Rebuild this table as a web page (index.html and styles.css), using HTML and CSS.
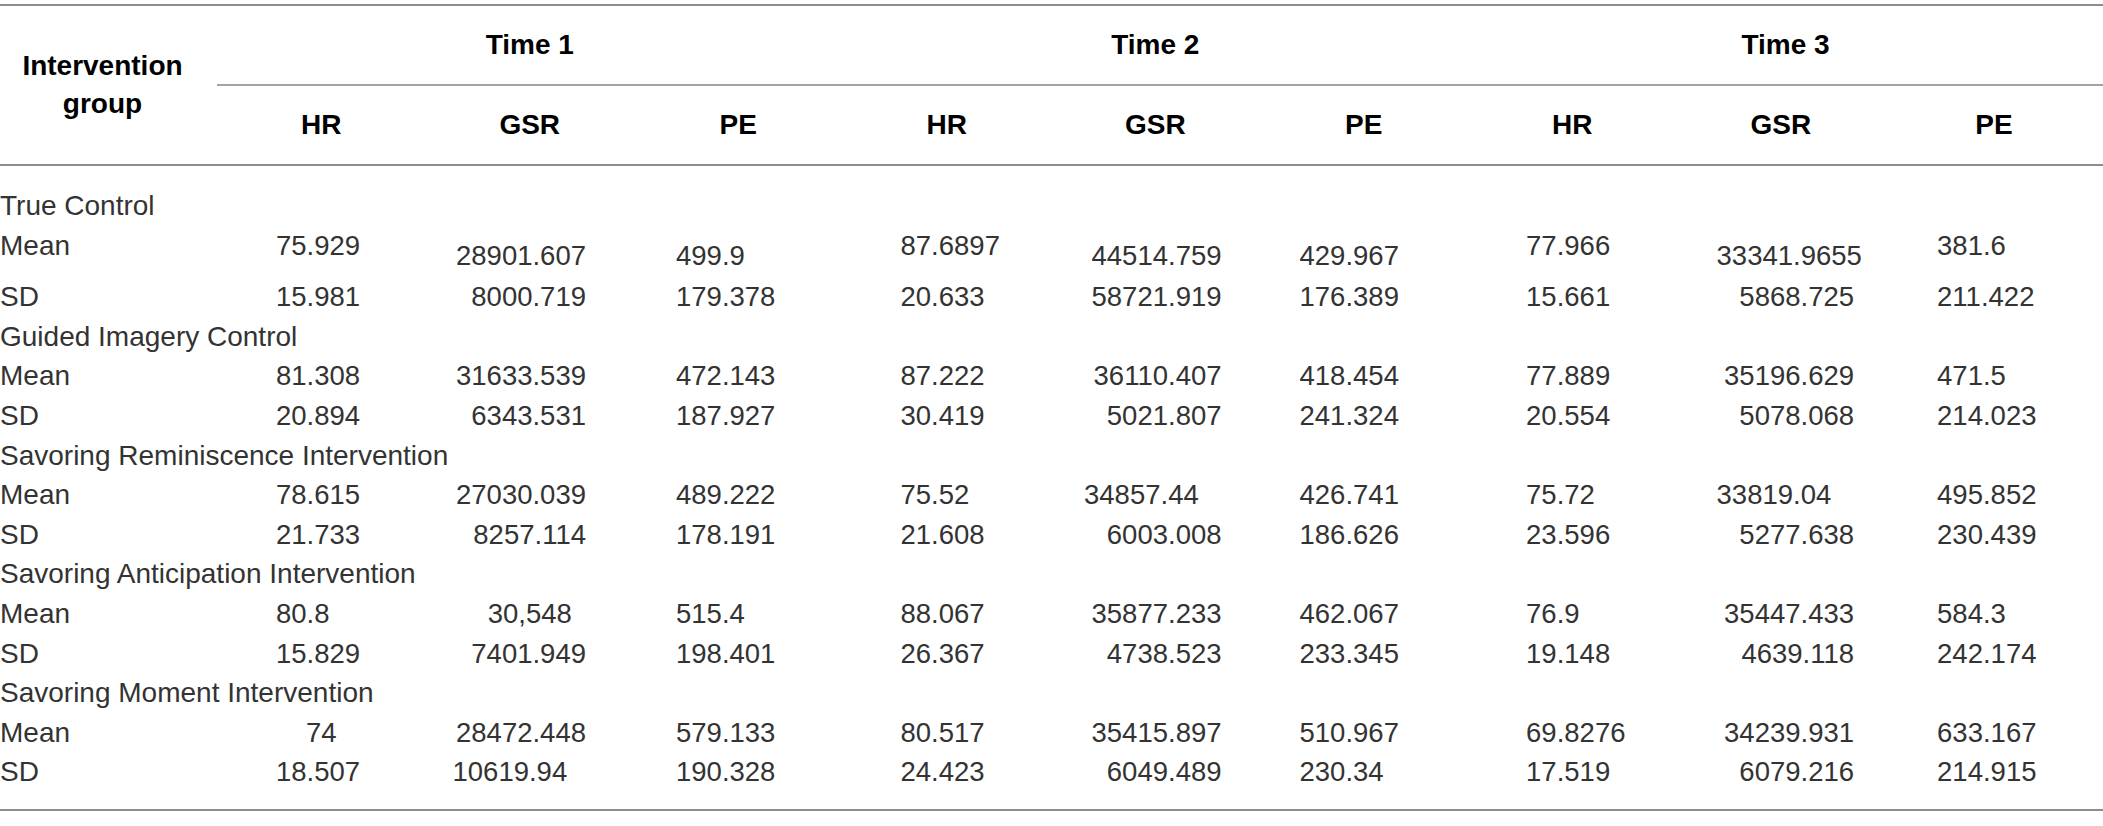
FILE: index.html
```html
<!DOCTYPE html>
<html lang="en">
  <head>
    <meta charset="UTF-8" />
    <meta name="viewport" content="width=device-width, initial-scale=1.0" />
    <title>Physiological measures by intervention group</title>
    <link rel="stylesheet" href="styles.css">
  </head>
  <body>
    <table class="results">
      <colgroup>
        <col class="col-group" />
        <col class="col-val" />
        <col class="col-val" />
        <col class="col-val" />
        <col class="col-val" />
        <col class="col-val" />
        <col class="col-val" />
        <col class="col-val" />
        <col class="col-val" />
        <col />
      </colgroup>
      <thead>
        <tr>
          <th class="group-head" rowspan="2">Intervention<br />group</th>
          <th class="time-head" colspan="3">Time 1</th>
          <th class="time-head" colspan="3">Time 2</th>
          <th class="time-head" colspan="3">Time 3</th>
        </tr>
        <tr class="sub-head">
          <th>HR</th>
          <th>GSR</th>
          <th>PE</th>
          <th>HR</th>
          <th>GSR</th>
          <th>PE</th>
          <th>HR</th>
          <th>GSR</th>
          <th>PE</th>
        </tr>
      </thead>
      <tbody>
        <tr class="group-row"><td colspan="10">True Control</td></tr>
        <tr class="data tall">
          <td>Mean</td>
          <td>75.929</td>
          <td class="lo">28901.607</td>
          <td class="lo">499.9</td>
          <td>87.6897</td>
          <td class="lo">44514.759</td>
          <td class="lo">429.967</td>
          <td>77.966</td>
          <td class="lo l">33341.9655</td>
          <td>381.6</td>
        </tr>
        <tr class="data">
          <td>SD</td>
          <td>15.981</td>
          <td>8000.719</td>
          <td>179.378</td>
          <td>20.633</td>
          <td>58721.919</td>
          <td>176.389</td>
          <td>15.661</td>
          <td>5868.725</td>
          <td>211.422</td>
        </tr>

        <tr class="group-row"><td colspan="10">Guided Imagery Control</td></tr>
        <tr class="data">
          <td>Mean</td>
          <td>81.308</td>
          <td>31633.539</td>
          <td>472.143</td>
          <td>87.222</td>
          <td>36110.407</td>
          <td>418.454</td>
          <td>77.889</td>
          <td>35196.629</td>
          <td>471.5</td>
        </tr>
        <tr class="data">
          <td>SD</td>
          <td>20.894</td>
          <td>6343.531</td>
          <td>187.927</td>
          <td>30.419</td>
          <td>5021.807</td>
          <td>241.324</td>
          <td>20.554</td>
          <td>5078.068</td>
          <td>214.023</td>
        </tr>

        <tr class="group-row"><td colspan="10">Savoring Reminiscence Intervention</td></tr>
        <tr class="data">
          <td>Mean</td>
          <td>78.615</td>
          <td>27030.039</td>
          <td>489.222</td>
          <td>75.52</td>
          <td class="l">34857.44</td>
          <td>426.741</td>
          <td>75.72</td>
          <td class="l">33819.04</td>
          <td>495.852</td>
        </tr>
        <tr class="data">
          <td>SD</td>
          <td>21.733</td>
          <td>8257.114</td>
          <td>178.191</td>
          <td>21.608</td>
          <td>6003.008</td>
          <td>186.626</td>
          <td>23.596</td>
          <td>5277.638</td>
          <td>230.439</td>
        </tr>

        <tr class="group-row"><td colspan="10">Savoring Anticipation Intervention</td></tr>
        <tr class="data">
          <td>Mean</td>
          <td>80.8</td>
          <td class="c">30,548</td>
          <td>515.4</td>
          <td>88.067</td>
          <td>35877.233</td>
          <td>462.067</td>
          <td>76.9</td>
          <td>35447.433</td>
          <td>584.3</td>
        </tr>
        <tr class="data">
          <td>SD</td>
          <td>15.829</td>
          <td>7401.949</td>
          <td>198.401</td>
          <td>26.367</td>
          <td>4738.523</td>
          <td>233.345</td>
          <td>19.148</td>
          <td>4639.118</td>
          <td>242.174</td>
        </tr>

        <tr class="group-row"><td colspan="10">Savoring Moment Intervention</td></tr>
        <tr class="data">
          <td>Mean</td>
          <td class="c">74</td>
          <td>28472.448</td>
          <td>579.133</td>
          <td>80.517</td>
          <td>35415.897</td>
          <td>510.967</td>
          <td>69.8276</td>
          <td>34239.931</td>
          <td>633.167</td>
        </tr>
        <tr class="data">
          <td>SD</td>
          <td>18.507</td>
          <td class="l">10619.94</td>
          <td>190.328</td>
          <td>24.423</td>
          <td>6049.489</td>
          <td>230.34</td>
          <td>17.519</td>
          <td>6079.216</td>
          <td>214.915</td>
        </tr>
      </tbody>
    </table>
  </body>
</html>
```

FILE: styles.css
```css
body {
  margin: 0;
  background: #fff;
}
.results {
  width: 100%;
  table-layout: fixed;
  border-collapse: separate;
  border-spacing: 0;
  margin-top: 4px;
  border-top: 2px solid #8d8d8d;
  border-bottom: 2px solid #8d8d8d;
  font-family: "Liberation Sans", Arial, sans-serif;
  color: #333;
}
.col-group {
  width: 217px;
}
.col-val {
  width: 208.5px;
}

/* header */
.results th {
  font-size: 28px;
  font-weight: bold;
  color: #000;
  line-height: 38px;
  padding: 20px 0;
  text-align: center;
}
.results .group-head {
  vertical-align: middle;
  padding: 0 12px 0 0;
  border-bottom: 2px solid #8d8d8d;
}
.results .time-head {
  border-bottom: 2px solid #a3a3a3;
}
.sub-head th {
  border-bottom: 2px solid #8d8d8d;
}

/* body */
.results td {
  font-size: 27.5px;
  line-height: 39.6px;
  padding: 0;
  vertical-align: top;
  white-space: nowrap;
  text-align: left;
}
.group-row td,
.data td:first-child {
  font-size: 28px;
}
.results tbody tr:first-child td {
  padding-top: 20px;
}
.results tbody tr:last-child td {
  padding-bottom: 17px;
}
.data.tall td {
  padding-bottom: 2px;
}

.data td:nth-child(2) {
  padding-left: 59px;
}
.data td:nth-child(3) {
  text-align: right;
  padding-right: 48px;
}
.data td:nth-child(4) {
  padding-left: 42px;
}
.data td:nth-child(5) {
  padding-left: 58px;
}
.data td:nth-child(6) {
  text-align: right;
  padding-right: 38px;
}
.data td:nth-child(7) {
  padding-left: 40px;
}
.data td:nth-child(8) {
  padding-left: 58px;
}
.data td:nth-child(9) {
  text-align: right;
  padding-right: 31px;
}
.data td:nth-child(10) {
  padding-left: 52px;
}

/* odd cells */
.data td.lo {
  padding-top: 10px;
}
.data td.c {
  text-align: center;
  padding-left: 0;
  padding-right: 0;
}
.data td.l {
  text-align: left;
  padding-right: 0;
}
.data td.l:nth-child(3) {
  padding-left: 27px;
}
.data td.l:nth-child(6) {
  padding-left: 33px;
}
.data td.l:nth-child(9) {
  padding-left: 40px;
}
```
